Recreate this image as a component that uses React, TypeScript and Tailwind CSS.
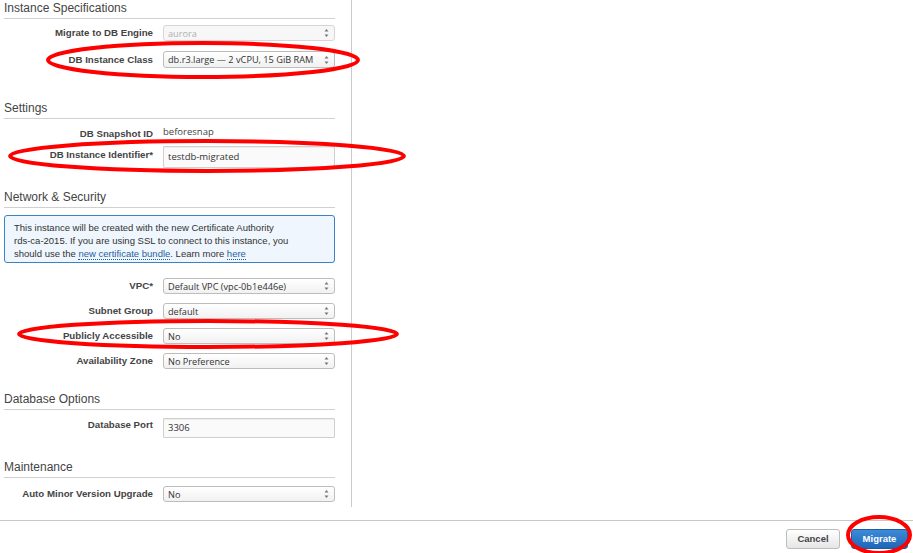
import React from 'react'

const font = { fontFamily: '"Liberation Sans", Arial, sans-serif' }
const uiFont = { fontFamily: '"Open Sans", "Noto Sans", sans-serif' }

function Header({ title, className = '' }: { title: string; className?: string }) {
  return (
    <div className={`border-b border-[#d0d0d0] pb-[2px] ${className}`}>
      <div className="text-[12px] leading-[16px] text-[#444]">{title}</div>
    </div>
  )
}

function Arrows() {
  return (
    <svg width="7" height="12" viewBox="0 0 7 12" className="shrink-0">
      <path d="M3.5 2 L5.5 4.5 L1.5 4.5 Z" fill="#777" />
      <path d="M3.5 10 L5.5 7.5 L1.5 7.5 Z" fill="#777" />
    </svg>
  )
}

function Select({ value, disabled = false, h = 'h-[16px]' }: { value: string; disabled?: boolean; h?: string }) {
  return (
    <div
      className={`w-[172px] ${h} rounded-[3px] border flex items-center justify-between pl-[4px] pr-[4px] ${
        disabled
          ? 'border-[#d6d6d6] bg-[#f7f7f7] text-[#b0b0b0]'
          : 'border-[#bdbdbd] bg-gradient-to-b from-white to-[#f1f1f1] text-[#333]'
      }`}
    >
      <span className="text-[9.2px] leading-[13px] whitespace-nowrap" style={uiFont}>
        {value}
      </span>
      <Arrows />
    </div>
  )
}

function TextInput({ value, h }: { value: string; h: string }) {
  return (
    <div className={`w-[172px] ${h} border border-[#cfcfcf] bg-[#fafafa] rounded-[1px] flex items-center pl-[4px] shadow-[inset_0_1px_1px_rgba(0,0,0,0.06)]`}>
      <span className="text-[9.5px] text-[#333]" style={uiFont}>
        {value}
      </span>
    </div>
  )
}

function Row({
  label,
  children,
  className = '',
  top = false,
  pt = 'pt-[3px]',
}: {
  label: string
  children: React.ReactNode
  className?: string
  top?: boolean
  pt?: string
}) {
  return (
    <div className={`flex ${top ? 'items-start' : 'items-center'} gap-[10px] ${className}`}>
      <div className={`w-[149px] text-right text-[9.7px] leading-[12px] font-bold text-[#444] ${top ? pt : ''}`}>{label}</div>
      {children}
    </div>
  )
}

export default function App() {
  return (
    <div className="relative w-[913px] h-[553px] bg-white overflow-hidden" style={font}>
      {/* main form */}
      <div className="h-[507px] w-[352px] border-r border-[#cccccc] pl-[4px] pr-[16px]">
        <Header title="Instance Specifications" />
        <Row label="Migrate to DB Engine" className="mt-[6px]">
          <Select value="aurora" disabled />
        </Row>
        <Row label="DB Instance Class" className="mt-[10px]">
          <Select value="db.r3.large — 2 vCPU, 15 GiB RAM" h="h-[17px]" />
        </Row>

        <Header title="Settings" className="mt-[32px]" />
        <Row label="DB Snapshot ID" className="mt-[8px] h-[14px]">
          <span className="text-[9.5px] text-[#444] -mt-[3px]" style={uiFont}>
            beforesnap
          </span>
        </Row>
        <Row label="DB Instance Identifier*" className="mt-[5px]" top pt="pt-[3px]">
          <TextInput value="testdb-migrated" h="h-[22px]" />
        </Row>

        <Header title="Network & Security" className="mt-[21px]" />
        <div className="mt-[7px] h-[48px] border border-[#3a82c4] bg-[#eff6fd] rounded-[3px] px-[9px] pt-[5px] text-[9.5px] leading-[13px] text-[#333]">
          This instance will be created with the new Certificate Authority
          <br />
          rds-ca-2015. If you are using SSL to connect to this instance, you
          <br />
          should use the{' '}
          <span className="text-[#1f5fa5] border-b border-dotted border-[#1f5fa5]">new certificate bundle</span>. Learn more{' '}
          <span className="text-[#1f5fa5] border-b border-dotted border-[#1f5fa5]">here</span>
        </div>
        <Row label="VPC*" className="mt-[15px]">
          <Select value="Default VPC (vpc-0b1e446e)" />
        </Row>
        <Row label="Subnet Group" className="mt-[9px]">
          <Select value="default" />
        </Row>
        <Row label="Publicly Accessible" className="mt-[9px]">
          <Select value="No" />
        </Row>
        <Row label="Availability Zone" className="mt-[9px]">
          <Select value="No Preference" />
        </Row>

        <Header title="Database Options" className="mt-[22px]" />
        <Row label="Database Port" className="mt-[8px]" top pt="pt-[1px]">
          <TextInput value="3306" h="h-[20px]" />
        </Row>

        <Header title="Maintenance" className="mt-[21px]" />
        <Row label="Auto Minor Version Upgrade" className="mt-[8px]">
          <Select value="No" />
        </Row>
      </div>

      {/* footer */}
      <div className="mt-[13px] border-t border-[#c8c8c8] flex justify-end items-center gap-[11px] pr-[5px] pt-[8px]">
        <button className="w-[54px] h-[20px] rounded-[3px] border border-[#bcbcbc] bg-gradient-to-b from-white to-[#e6e6e6] text-[9.5px] font-bold text-[#444]">
          Cancel
        </button>
        <button className="w-[57px] h-[20px] rounded-[3px] border border-[#1b5ea8] bg-gradient-to-b from-[#3d8bd8] to-[#1f66b8] text-[9.5px] font-bold text-white">
          Migrate
        </button>
      </div>

      {/* red annotation ellipses */}
      <svg className="absolute inset-0 pointer-events-none" width="913" height="553" viewBox="0 0 913 553">
        <g fill="none" stroke="#ff0000" strokeWidth="4">
          <ellipse cx="203" cy="60" rx="155" ry="17" />
          <ellipse cx="207" cy="156" rx="197" ry="15" />
          <ellipse cx="208" cy="334" rx="189" ry="13" />
          <ellipse cx="879" cy="535" rx="31" ry="18" />
        </g>
      </svg>
    </div>
  )
}
